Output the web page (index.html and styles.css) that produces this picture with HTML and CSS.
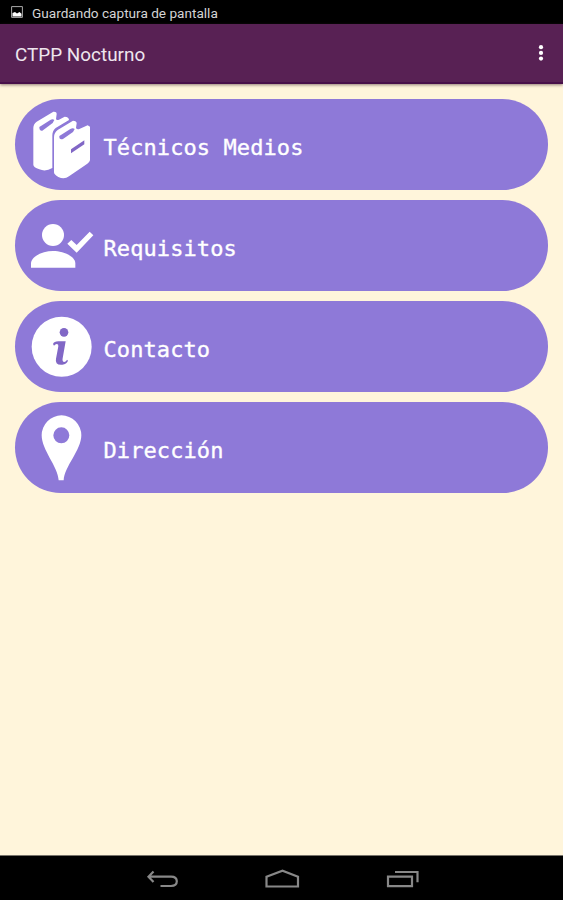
FILE: index.html
```html
<!DOCTYPE html>
<html lang="es">
<head>
<meta charset="utf-8">
<meta name="viewport" content="width=device-width">
<title>CTPP Nocturno</title>
<link rel="stylesheet" href="styles.css">
</head>
<body>
<div class="status">
  <svg class="status-icon" viewBox="0 0 12 12"><path d="M.6 .6H11.4V11.4H.6Z" fill="none" stroke="#aaa"/><path d="M1.5 10.5V7L4 6l2 1.6L8.5 6l2 1.8v2.7Z" fill="#fff"/></svg>
  <span class="status-text">Guardando captura de pantalla</span>
</div>
<header class="appbar">
  <h1 class="title">CTPP Nocturno</h1>
  <svg class="more" viewBox="0 0 6 18"><circle cx="3" cy="3.2" r="2.1"/><circle cx="3" cy="8.9" r="2.1"/><circle cx="3" cy="14.6" r="2.1"/></svg>
</header>
<main class="menu">
  <a class="item">
    <svg class="icon" viewBox="15 25 264 274">
      <path d="M70 112Q70 100 80 93L130 63Q140 62 140 70L138 86Q141 90 147 87L164 78Q177 79 177 88L137 112Q127 121 127 134V232Q107 244 88 236Q70 230 70 222Z"/>
      <path d="M132 140Q132 126 143 118L189 90Q200 90 200 98L198 112Q201 117 208 115L233 104L240 108V209Q238 216 232 219L177 257Q163 267 145 259Q132 252 132 245Z"/>
      <path class="slot" d="M88 109L121 88Q128 84 133 88L128 97L97 120Q88 122 88 109Z"/>
      <path class="slot" d="M148 136L181 115Q189 110 194 115L189 124L159 145Q147 149 148 136Z"/>
      <path class="cut" d="M183 176L223 149V161L183 188Z"/>
    </svg>
    <span class="label">Técnicos Medios</span>
  </a>
  <a class="item">
    <svg class="icon" viewBox="15 14 264 274">
      <circle cx="129" cy="119" r="33"/>
      <path d="M63 217V203C66 181 101 167 129 167S194 181 196 203V217Z"/>
      <path d="M172 145L184 134L200 149L239 109L250 120L200 172Z"/>
    </svg>
    <span class="label">Requisitos</span>
  </a>
  <a class="item">
    <svg class="icon" viewBox="15 18 264 274">
      <circle cx="155" cy="155" r="90"/>
      <circle class="cut" cx="162" cy="112" r="13"/>
      <path class="cut" d="M129 147Q132 139 145 139H167L158 190Q156 201 163 201Q169 200 171 194L174 197Q170 208 157 209Q134 211 138 191L145 154Q146 147 140 147Q136 148 132 152Z"/>
    </svg>
    <span class="label">Contacto</span>
  </a>
  <a class="item">
    <svg class="icon" viewBox="15 21 264 274">
      <path fill-rule="evenodd" d="M146 256C144 215 95 165 95 121A59.5 60 0 0 1 214 121C214 165 163 215 161 256ZM154 97A24 24 0 1 0 154 145A24 24 0 1 0 154 97Z"/>
    </svg>
    <span class="label">Dirección</span>
  </a>
</main>
<nav class="navbar">
  <svg class="nav-icon" viewBox="0 0 34 22"><path d="M9.5 2.5L4.5 7.7L9.5 13M5 7.7H27Q32.8 7.7 32.8 12.3T27 17H16.5"/></svg>
  <svg class="nav-icon home" viewBox="0 0 36 22"><path d="M2.5 17.5V7.7L18.5 1.7L34 7.7V17.5Z"/></svg>
  <svg class="nav-icon" viewBox="0 0 34 22"><path d="M2 7.7H26V17.2H2ZM9 3H31.5V13.3"/></svg>
</nav>
</body>
</html>
```
FILE: styles.css
```css
* { box-sizing: border-box; }
body {
  margin: 0;
  height: 900px;
  display: flex;
  flex-direction: column;
  background: #fff5db;
  font-family: Roboto, sans-serif;
  overflow: hidden;
}
.status {
  height: 23.5px;
  background: #000;
  display: flex;
  align-items: center;
  padding: 2px 11px 0;
  gap: 9px;
}
.status-icon { width: 12px; height: 12px; margin-top: -1px; }
.status-text { color: #d4d4d4; font-size: 13.6px; line-height: 20px; white-space: nowrap; }
.appbar {
  height: 60px;
  background: #582154;
  border-bottom: 2px solid #48104a;
  box-shadow: 0 1px 3px rgba(70, 40, 50, .6);
  display: flex;
  align-items: center;
  justify-content: space-between;
  padding: 5px 19.5px 0 15px;
}
.title { margin: 0; color: #eee6ee; font-size: 18.9px; font-weight: 400; line-height: 24px; }
.more { width: 6px; height: 18px; fill: #fff; margin-top: -4px; }
.menu {
  flex: 1;
  display: flex;
  flex-direction: column;
  gap: 9.8px;
  padding: 15px 15px 0;
}
.item {
  height: 91.4px;
  border-radius: 46px;
  background: #8e79d8;
  display: flex;
  align-items: center;
}
.icon { width: 88px; height: 91.4px; fill: #fff; flex: none; }
.cut { fill: #8167c6; }
.slot { fill: #8e79d8; }
.label {
  color: #fff;
  font-family: "DejaVu Sans Mono", monospace;
  font-size: 22px;
  line-height: 28px;
  letter-spacing: .09px;
  padding: 7px 0 0 .5px;
  -webkit-text-stroke: .35px #fff;
}
.navbar {
  height: 45px;
  background: #000;
  border-top: 1px solid #77736a;
  display: flex;
  align-items: center;
  justify-content: center;
  gap: 86px;
  padding-top: 4px;
}
.nav-icon { width: 34px; height: 22px; fill: none; stroke: #888; stroke-width: 2.2; }
.home { width: 36px; }
```
